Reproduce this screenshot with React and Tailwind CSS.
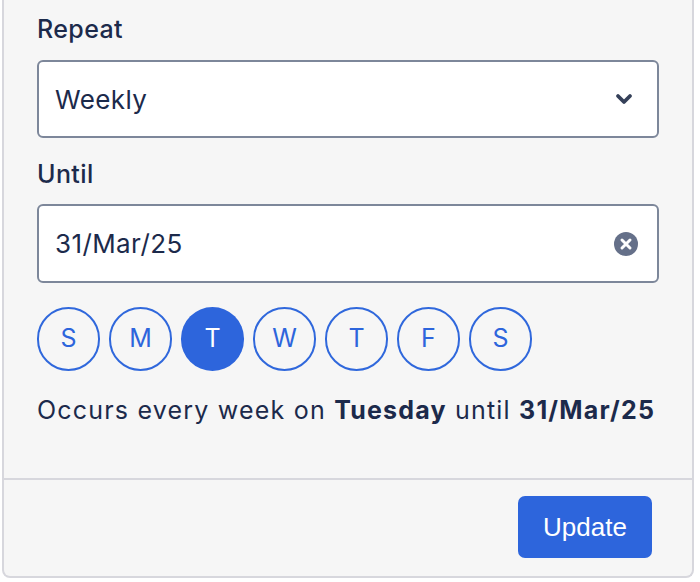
import { useState } from "react";

const days = ["S", "M", "T", "W", "T", "F", "S"];

export default function App() {
  const [selected, setSelected] = useState(2);

  return (
    <div className="w-[700px] h-[582px] bg-white overflow-hidden" style={{ fontFamily: "Inter, 'Noto Sans', sans-serif" }}>
      <div className="ml-[2px] w-[692px] h-[578px] flex flex-col bg-[#f6f6f6] border-x-2 border-b-2 border-[#d7d7dd] rounded-b-[8px]">
        <div className="flex-1 px-[33px] pt-[11px] text-[#1c2a4b]">
          {/* Repeat */}
          <label className="block text-[25px] font-medium leading-[36px] tracking-[0.4px]">Repeat</label>
          <div className="mt-[13px] h-[78px] flex items-center justify-between px-[16px] bg-white border-2 border-[#7d879a] rounded-[6px]">
            <span className="text-[26px] tracking-[0.4px]">Weekly</span>
            <svg width="18" height="12" viewBox="0 0 18 12" className="mr-[8px]">
              <path d="M3 3l6 6 6-6" fill="none" stroke="#354059" strokeWidth="3.8" strokeLinecap="round" strokeLinejoin="round" />
            </svg>
          </div>

          {/* Until */}
          <label className="block mt-[18px] text-[25px] font-medium leading-[36px] tracking-[0.4px]">Until</label>
          <div className="mt-[12px] h-[79px] flex items-center justify-between px-[16px] bg-white border-2 border-[#7d879a] rounded-[6px]">
            <span className="text-[26px] tracking-[0.4px]">31/Mar/25</span>
            <svg width="24" height="24" viewBox="0 0 24 24" className="mr-[3px]">
              <circle cx="12" cy="12" r="12" fill="#657089" />
              <path d="M8 8l8 8M16 8l-8 8" stroke="white" strokeWidth="3" strokeLinecap="round" />
            </svg>
          </div>

          {/* Days */}
          <div className="mt-[24px] flex gap-[9px]">
            {days.map((d, i) => (
              <button
                key={i}
                onClick={() => setSelected(i)}
                className={
                  i === selected
                    ? "w-[63px] h-[64px] rounded-full bg-[#2d65dc] text-white text-[25px] flex items-center justify-center"
                    : "w-[63px] h-[64px] rounded-full border-2 border-[#3068dc] text-[#2d65dc] text-[25px] flex items-center justify-center"
                }
              >
                {d}
              </button>
            ))}
          </div>

          {/* Summary */}
          <p className="mt-[23px] text-[25px] leading-[32px] tracking-[1.2px] whitespace-nowrap">
            Occurs every week on <b className="font-bold">Tuesday</b> until <b className="font-bold">31/Mar/25</b>
          </p>
        </div>

        {/* Footer */}
        <div className="h-[98px] border-t-2 border-[#d7d7dd] flex items-start justify-end pt-[16px] pr-[40px]">
          <button className="w-[134px] h-[62px] rounded-[7px] bg-[#2d65dc] text-white text-[26px]" style={{ fontFamily: "'Liberation Sans', Arial, sans-serif" }}>
            Update
          </button>
        </div>
      </div>
    </div>
  );
}
